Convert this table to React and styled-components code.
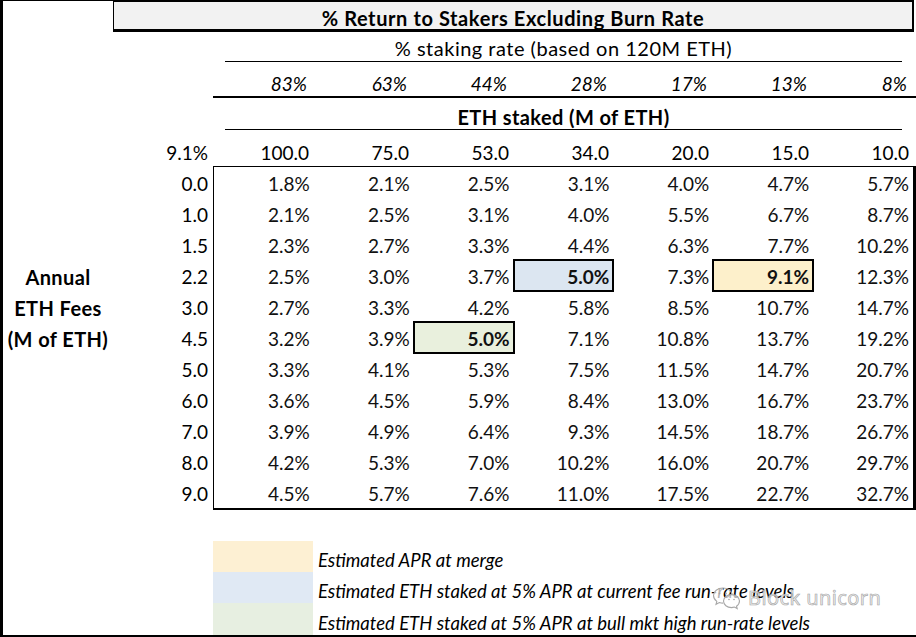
import React from 'react';
import styled, { createGlobalStyle } from 'styled-components';

const Global = createGlobalStyle`
  html, body { margin: 0; padding: 0; background: #fff; }
  body { font-family: Lato, "Open Sans", sans-serif; color: #000; }
`;

const Sheet = styled.div`
  position: relative;
  width: 916px;
  height: 637px;
  box-sizing: border-box;
  border-left: 3px solid #000;
  border-bottom: 2px solid #000;
  display: grid;
  grid-template-columns: 110px 100px 700px 3px;
  grid-template-rows: 32px 30px 36px 32px 36px 344px 1fr;
  background: #fff;
  overflow: hidden;
`;

const Corner = styled.div`
  grid-column: 1;
  grid-row: 1;
  border-top: 1px solid #000;
`;

const TitleBox = styled.div`
  grid-column: 2 / 5;
  grid-row: 1;
  margin-right: 2px;
  box-sizing: border-box;
  border-left: 1px solid #000;
  border-top: 2px solid #000;
  border-right: 2px solid #000;
  border-bottom: 3px solid #000;
  background: #f2f2f2;
  display: flex;
  align-items: center;
  justify-content: center;
  font-weight: 700;
  font-size: 20px;
  letter-spacing: 0.6px;
  line-height: 1;
  padding-top: 4px;
`;

const RuledHeading = styled.div`
  grid-column: 3;
  grid-row: ${p => p.$row};
  margin: 0 11px 0 12px;
  border-bottom: 1px solid #000;
  display: flex;
  align-items: flex-end;
  justify-content: center;
  font-size: 20px;
  letter-spacing: ${p => (p.$bold ? 0.4 : 0.5)}px;
  font-weight: ${p => (p.$bold ? 700 : 400)};
  line-height: 1;
  padding-bottom: ${p => p.$pad}px;
`;

const ColumnRow = styled.div`
  grid-column: 3 / 5;
  grid-row: ${p => p.$row};
  display: grid;
  grid-template-columns: repeat(7, 100px) 3px;
  align-items: end;
  border-bottom: ${p => (p.$rule ? '2px solid #000' : 'none')};
  padding-bottom: ${p => p.$pad}px;
`;

const HeadCell = styled.div`
  text-align: right;
  padding-right: ${p => (p.$italic ? 6 : 4)}px;
  font-size: 19px;
  line-height: 1;
  font-style: ${p => (p.$italic ? 'italic' : 'normal')};
`;

const CornerValue = styled.div`
  grid-column: 2;
  grid-row: 5;
  display: flex;
  align-items: flex-end;
  justify-content: flex-end;
  padding: 0 5px 4px 0;
  font-size: 19px;
  line-height: 1;
`;

const RowStack = styled.div`
  grid-column: ${p => p.$col};
  grid-row: 6;
  display: grid;
  grid-template-rows: repeat(11, 1fr);
  padding: 1px 0 2px;
`;

const SideLabel = styled.div`
  display: flex;
  align-items: center;
  justify-content: center;
  font-weight: 700;
  font-size: 20px;
  letter-spacing: 0.4px;
  line-height: 1;
  padding-top: 2px;
  white-space: nowrap;
`;

const RowHead = styled.div`
  display: flex;
  align-items: center;
  justify-content: flex-end;
  padding: 2px 5px 0 0;
  font-size: 19px;
  line-height: 1;
`;

const DataTable = styled.div`
  grid-column: 3 / 5;
  grid-row: 6;
  box-sizing: border-box;
  border-left: 1px solid #000;
  border-top: 1px solid #000;
  border-right: 3px solid #000;
  border-bottom: 2px solid #000;
  display: grid;
  grid-template-columns: repeat(7, 1fr);
  grid-template-rows: repeat(11, 1fr);
`;

const fills = { blue: '#dce6f1', yellow: '#fdf0cb', green: '#e9f0dd' };

const Cell = styled.div`
  display: flex;
  align-items: center;
  justify-content: flex-end;
  padding: 2px 4px 0 0;
  font-size: 19px;
  line-height: 1;
  color: #111;
  font-weight: ${p => (p.$hl ? 700 : 400)};
  background: ${p => (p.$hl ? fills[p.$hl] : 'transparent')};
  outline: ${p => (p.$hl ? '2px solid #000' : 'none')};
  outline-offset: -1px;
`;

const Legend = styled.div`
  grid-column: 3 / 5;
  grid-row: 7;
  padding-top: 31px;
  display: grid;
  grid-template-columns: 100px 1fr;
  grid-template-rows: 31px 31px 32px;
`;

const swatchFills = { yellow: '#fdf0d3', blue: '#e0e9f4', green: '#e7efe1' };

const Swatch = styled.div`
  background: ${p => swatchFills[p.$tone]};
`;

const LegendText = styled.div`
  display: flex;
  align-items: flex-end;
  padding: 0 0 3px 5px;
  font-size: 18.5px;
  font-style: italic;
  line-height: 1;
  white-space: nowrap;
`;

const Watermark = styled.div`
  position: absolute;
  left: 709px;
  top: 586px;
  display: flex;
  align-items: center;
  gap: 6px;
  font-family: "Noto Sans", sans-serif;
  font-size: 20px;
  line-height: 1;
  color: rgba(235, 235, 235, 0.8);
  -webkit-text-stroke: 0.6px #a3a3a3;
  letter-spacing: 0.4px;
`;

const pcts = ['83%', '63%', '44%', '28%', '17%', '13%', '8%'];
const staked = ['100.0', '75.0', '53.0', '34.0', '20.0', '15.0', '10.0'];
const rows = [
  ['0.0', '1.8%', '2.1%', '2.5%', '3.1%', '4.0%', '4.7%', '5.7%'],
  ['1.0', '2.1%', '2.5%', '3.1%', '4.0%', '5.5%', '6.7%', '8.7%'],
  ['1.5', '2.3%', '2.7%', '3.3%', '4.4%', '6.3%', '7.7%', '10.2%'],
  ['2.2', '2.5%', '3.0%', '3.7%', '5.0%', '7.3%', '9.1%', '12.3%'],
  ['3.0', '2.7%', '3.3%', '4.2%', '5.8%', '8.5%', '10.7%', '14.7%'],
  ['4.5', '3.2%', '3.9%', '5.0%', '7.1%', '10.8%', '13.7%', '19.2%'],
  ['5.0', '3.3%', '4.1%', '5.3%', '7.5%', '11.5%', '14.7%', '20.7%'],
  ['6.0', '3.6%', '4.5%', '5.9%', '8.4%', '13.0%', '16.7%', '23.7%'],
  ['7.0', '3.9%', '4.9%', '6.4%', '9.3%', '14.5%', '18.7%', '26.7%'],
  ['8.0', '4.2%', '5.3%', '7.0%', '10.2%', '16.0%', '20.7%', '29.7%'],
  ['9.0', '4.5%', '5.7%', '7.6%', '11.0%', '17.5%', '22.7%', '32.7%'],
];
const highlights = { '3-3': 'blue', '3-5': 'yellow', '5-2': 'green' };
const sideLabels = ['', '', '', 'Annual', 'ETH Fees', '(M of ETH)', '', '', '', '', ''];
const legend = [
  ['yellow', 'Estimated APR at merge'],
  ['blue', 'Estimated ETH staked at 5% APR at current fee run-rate levels'],
  ['green', 'Estimated ETH staked at 5% APR at bull mkt high run-rate levels'],
];

function WeChatMark() {
  return (
    <svg width="30" height="24" viewBox="0 0 30 24" fill="none" stroke="#a8a8a8" strokeWidth="1.1">
      <path d="M11 2C5.5 2 1.5 5.4 1.5 9.6c0 2.4 1.3 4.4 3.3 5.8l-.8 2.9 3.3-1.8c1.2.4 2.4.6 3.7.6" fill="rgba(255,255,255,0.7)" />
      <path d="M20.3 8.2C18.8 4.6 15.2 2 11 2" />
      <path d="M19.5 8.6c-4.4 0-8 2.9-8 6.5s3.6 6.5 8 6.5c1 0 2-.2 2.9-.5l2.8 1.5-.7-2.4c1.8-1.2 3-3 3-5.1 0-3.6-3.6-6.5-8-6.5z" fill="rgba(255,255,255,0.7)" />
      <circle cx="7.5" cy="7.5" r="0.9" fill="#a8a8a8" stroke="none" />
      <circle cx="14" cy="7.5" r="0.9" fill="#a8a8a8" stroke="none" />
      <circle cx="17" cy="13.5" r="0.8" fill="#a8a8a8" stroke="none" />
      <circle cx="22" cy="13.5" r="0.8" fill="#a8a8a8" stroke="none" />
    </svg>
  );
}

export default function App() {
  return (
    <>
      <Global />
      <Sheet>
        <Corner />
        <TitleBox>% Return to Stakers Excluding Burn Rate</TitleBox>

        <RuledHeading $row={2} $pad={3}>% staking rate (based on 120M ETH)</RuledHeading>

        <ColumnRow $row={3} $rule $pad={3}>
          {pcts.map(p => (
            <HeadCell key={p} $italic>{p}</HeadCell>
          ))}
        </ColumnRow>

        <RuledHeading $row={4} $bold $pad={2}>ETH staked (M of ETH)</RuledHeading>

        <CornerValue>9.1%</CornerValue>
        <ColumnRow $row={5} $pad={4}>
          {staked.map(s => (
            <HeadCell key={s}>{s}</HeadCell>
          ))}
        </ColumnRow>

        <RowStack $col={1}>
          {sideLabels.map((l, i) => (
            <SideLabel key={i}>{l}</SideLabel>
          ))}
        </RowStack>

        <RowStack $col={2}>
          {rows.map(r => (
            <RowHead key={r[0]}>{r[0]}</RowHead>
          ))}
        </RowStack>

        <DataTable>
          {rows.map((r, ri) =>
            r.slice(1).map((v, ci) => (
              <Cell key={`${ri}-${ci}`} $hl={highlights[`${ri}-${ci}`]}>{v}</Cell>
            ))
          )}
        </DataTable>

        <Legend>
          {legend.map(([tone, text]) => (
            <React.Fragment key={tone}>
              <Swatch $tone={tone} />
              <LegendText>{text}</LegendText>
            </React.Fragment>
          ))}
        </Legend>

        <Watermark>
          <WeChatMark />
          <span>Block unicorn</span>
        </Watermark>
      </Sheet>
    </>
  );
}
